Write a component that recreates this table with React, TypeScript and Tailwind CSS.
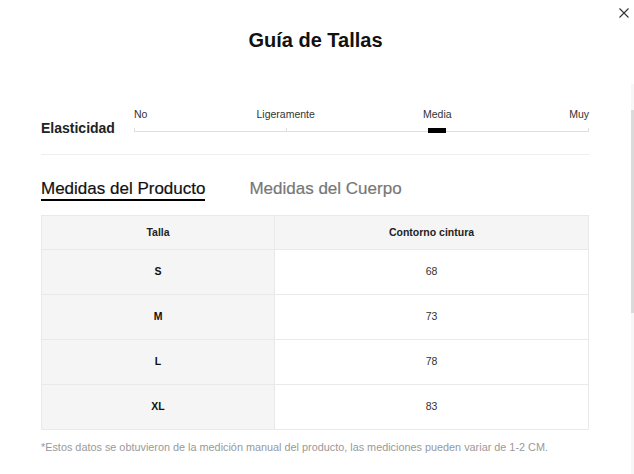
import React from 'react';

const sizes = [
  { size: 'S', waist: '68' },
  { size: 'M', waist: '73' },
  { size: 'L', waist: '78' },
  { size: 'XL', waist: '83' },
];

const levels = ['No', 'Ligeramente', 'Media', 'Muy'];

function ElasticityScale({ active }: { active: number }) {
  return (
    <div className="flex-1">
      <div className="relative h-[14px] text-[10.5px] leading-[14px] text-[#333]">
        {levels.map((label, i) => (
          <span
            key={label}
            className={`absolute top-0 whitespace-nowrap ${
              i === 0
                ? 'left-0'
                : i === 1
                ? 'left-[33.33%] -translate-x-1/2'
                : i === 2
                ? 'left-[66.66%] -translate-x-1/2'
                : 'right-0'
            }`}
          >
            {label}
          </span>
        ))}
      </div>
      <div className="relative h-[12px]">
        <div className="absolute left-0 right-0 top-[10px] h-px bg-[#dedede]" />
        <div className="absolute left-0 top-[7px] h-[4px] w-px bg-[#dedede]" />
        <div className="absolute left-[33.33%] top-[7px] h-[4px] w-px bg-[#dedede]" />
        <div className="absolute left-[66.66%] top-[7px] h-[4px] w-px bg-[#dedede]" />
        <div className="absolute right-0 top-[7px] h-[4px] w-px bg-[#dedede]" />
        {active === 2 && (
          <div className="absolute left-[66.66%] top-[7px] h-[5px] w-[18px] -translate-x-1/2 bg-black" />
        )}
      </div>
    </div>
  );
}

export default function App() {
  return (
    <div className="flex h-[474px] w-[634px] overflow-hidden bg-white font-['Liberation_Sans',Arial,sans-serif] text-[#222]">
      <div className="flex w-[631px] flex-col">
        <div className="flex h-[18px] justify-end pr-[2px] pt-[8px]">
          <button className="h-[10px] w-[10px] text-[#333]" aria-label="Cerrar">
            <svg viewBox="0 0 10 10" className="h-[10px] w-[10px]" fill="none" stroke="currentColor" strokeWidth="1.1">
              <path d="M0.5 0.5L9.5 9.5M9.5 0.5L0.5 9.5" />
            </svg>
          </button>
        </div>

        <h2 className="mt-[10px] text-center text-[20px] font-bold leading-[24px] text-[#111]">Guía de Tallas</h2>

        <div className="pl-[41px] pr-[42px]">
          <div className="mt-[55px] flex">
            <div className="w-[93px] pt-[13px] text-[14px] font-bold leading-[16px] text-[#222]">Elasticidad</div>
            <ElasticityScale active={2} />
          </div>

          <div className="mt-[18px] h-px bg-[#eeeeee]" />

          <div className="mt-[24px] flex gap-[44px] text-[17px] leading-[20px]">
            <button className="border-b-2 border-black text-[#111] [-webkit-text-stroke:0.2px_#111]">Medidas del Producto</button>
            <button className="border-b-2 border-transparent text-[#777] [-webkit-text-stroke:0.2px_#777]">Medidas del Cuerpo</button>
          </div>

          <div className="mt-[14px] grid grid-cols-[233px_314px] border-l border-t border-[#e9e9e9] text-[10.5px]">
            <div className="flex h-[34px] items-center justify-center border-b border-r border-[#e9e9e9] bg-[#f5f5f5] font-bold text-[#222]">
              Talla
            </div>
            <div className="flex h-[34px] items-center justify-center border-b border-r border-[#e9e9e9] bg-[#f5f5f5] font-bold text-[#222]">
              Contorno cintura
            </div>
            {sizes.map((row) => (
              <React.Fragment key={row.size}>
                <div className="flex h-[45px] items-center justify-center border-b border-r border-[#e9e9e9] bg-[#f5f5f5] font-bold text-[#111]">
                  {row.size}
                </div>
                <div className="flex h-[45px] items-center justify-center border-b border-r border-[#e9e9e9] bg-white text-[#333]">
                  {row.waist}
                </div>
              </React.Fragment>
            ))}
          </div>

          <p className="mt-[10px] text-[10.85px] leading-[14px] text-[#999]">
            *Estos datos se obtuvieron de la medición manual del producto, las mediciones pueden variar de 1-2 CM.
          </p>
        </div>
      </div>

      <div className="flex w-[3px] flex-col pt-[84px]">
        <div className="flex flex-1 flex-col bg-[#f7f7f7]">
          <div className="mt-[26px] h-[203px] bg-[#dadada]" />
        </div>
      </div>
    </div>
  );
}
